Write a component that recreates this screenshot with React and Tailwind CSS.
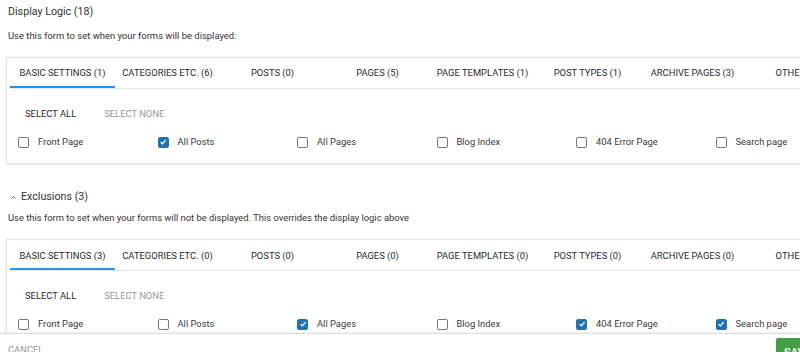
import { useState } from "react";

const tabs1 = [
  "Basic Settings (1)",
  "Categories etc. (6)",
  "Posts (0)",
  "Pages (5)",
  "Page Templates (1)",
  "Post Types (1)",
  "Archive Pages (3)",
  "Other (0)",
];

const tabs2 = [
  "Basic Settings (3)",
  "Categories etc. (0)",
  "Posts (0)",
  "Pages (0)",
  "Page Templates (0)",
  "Post Types (0)",
  "Archive Pages (0)",
  "Other (0)",
];

const options = ["Front Page", "All Posts", "All Pages", "Blog Index", "404 Error Page", "Search page"];

function Checkbox({ checked, onChange }) {
  return (
    <span
      onClick={onChange}
      className={`flex h-[11px] w-[11px] shrink-0 items-center justify-center rounded-[2px] border ${
        checked ? "border-[#2271b1] bg-[#2271b1]" : "border-[#777] bg-white"
      }`}
    >
      {checked && (
        <svg viewBox="0 0 10 10" className="h-[8px] w-[8px]">
          <path d="M2 5.2 L4.2 7.3 L8.2 2.8" fill="none" stroke="white" strokeWidth="1.6" />
        </svg>
      )}
    </span>
  );
}

function LogicCard({ tabs, initial }) {
  const [active, setActive] = useState(0);
  const [checked, setChecked] = useState(initial);

  const toggle = (name) =>
    setChecked(checked.includes(name) ? checked.filter((c) => c !== name) : [...checked, name]);

  return (
    <div className="w-[860px] shrink-0 border border-[#e6e6e6] bg-white shadow-[0_1px_2px_rgba(0,0,0,0.12)]">
      {/* tab bar */}
      <div className="ml-[3px] flex border-b border-[#e8e8e8]">
        {tabs.map((t, i) => (
          <button
            key={t}
            onClick={() => setActive(i)}
            className={`h-[30px] w-[105px] shrink-0 whitespace-nowrap border-b-2 pt-[3px] text-center text-[9.4px] uppercase text-[#2a2a2a] ${
              active === i ? "border-[#2196f3]" : "border-transparent"
            }`}
          >
            {t}
          </button>
        ))}
      </div>

      <div className="flex gap-[18px] pl-[11px] pt-[18px] text-[9.4px]">
        <button className="px-[7px] uppercase text-[#2a2a2a]" onClick={() => setChecked(options)}>
          Select All
        </button>
        <button className="px-[3px] uppercase text-[#999]" onClick={() => setChecked([])}>
          Select None
        </button>
      </div>

      <div className="flex pl-[11px] pt-[14px] pb-[14px]">
        {options.map((o) => (
          <label key={o} className="flex w-[139.5px] shrink-0 items-center gap-[9px] text-[9.4px] text-[#3a3a3a]">
            <Checkbox checked={checked.includes(o)} onChange={() => toggle(o)} />
            {o}
          </label>
        ))}
      </div>
    </div>
  );
}

export default function App() {
  return (
    <div className="flex h-[352px] flex-col overflow-hidden bg-white font-['Roboto',sans-serif] text-[#333]">
      <div className="flex-1 overflow-hidden">
        <div className="px-[8px] pt-[5px] text-[10.7px] leading-[14px]">Display Logic (18)</div>
        <div className="px-[8px] pt-[10px] text-[9.45px] leading-[13px]">
          Use this form to set when your forms will be displayed:
        </div>

        <div className="mt-[15px] flex pl-[6px]">
          <LogicCard tabs={tabs1} initial={["All Posts"]} />
        </div>

        <div className="flex items-center gap-[4px] px-[10px] pt-[26px] text-[10.7px] leading-[14px]">
          <svg viewBox="0 0 10 10" className="h-[7px] w-[7px]">
            <path d="M2 6.5 L5 3.5 L8 6.5" fill="none" stroke="#555" strokeWidth="1.3" />
          </svg>
          Exclusions (3)
        </div>
        <div className="px-[8px] pt-[7px] text-[9.4px] leading-[13px]">
          Use this form to set when your forms will not be displayed. This overrides the display logic above
        </div>

        <div className="mt-[15px] flex pl-[6px]">
          <LogicCard tabs={tabs2} initial={["All Pages", "404 Error Page", "Search page"]} />
        </div>
      </div>

      <footer className="flex h-[19px] shrink-0 items-start justify-between border-t border-[#ddd] bg-white shadow-[0_-1px_3px_rgba(0,0,0,0.06)]">
        <button className="px-[8px] pt-[10px] text-[9.4px] uppercase leading-[12px] text-[#999]">Cancel</button>
        <button className="mr-[-20px] mt-[4px] h-[30px] w-[44px] rounded-[2px] bg-[#43a047] pl-[8px] text-left text-[11px] font-medium uppercase leading-[30px] text-white">
          Save
        </button>
      </footer>
    </div>
  );
}
